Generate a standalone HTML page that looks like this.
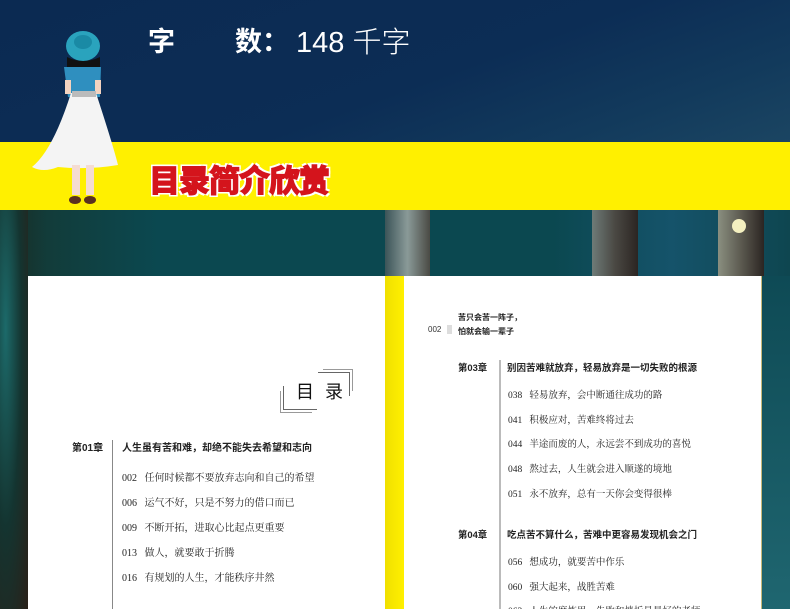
<!DOCTYPE html>
<html><head><meta charset="utf-8"><style>
*{margin:0;padding:0;box-sizing:border-box}
html,body{width:790px;height:609px;overflow:hidden}
body{position:relative;background:#0b4850;font-family:"Liberation Sans","Noto Sans CJK SC",sans-serif}
.a{position:absolute}
.t{position:absolute;font-family:"Liberation Serif","Noto Serif CJK SC",serif;font-size:10px;color:#222;white-space:nowrap}
.b{position:absolute;font-family:"Liberation Sans","Noto Sans CJK SC",sans-serif;font-size:10px;font-weight:bold;color:#222;white-space:nowrap}
</style></head><body>
<div class="a" style="left:0;top:0;width:790px;height:142px;background:linear-gradient(160deg,#0b2a52 0%,#0c2d55 55%,#123a5c 80%,#1b4562 100%)"></div>
<div class="a" style="left:148px;top:20px;font-size:27px;font-weight:bold;color:#fff">字</div>
<div class="a" style="left:235px;top:20px;font-size:27px;font-weight:bold;color:#fff">数：</div>
<div class="a" style="left:296px;top:19px;font-size:29px;font-weight:300;color:#fff">148 千字</div>
<div class="a" style="left:0;top:142px;width:790px;height:68px;background:#fff000"></div>
<div class="a" style="left:149px;top:156px;font-size:31px;font-weight:900;color:#d4141c;letter-spacing:-1px;-webkit-text-stroke:1px #d4141c;text-shadow:2px 2px 0 #fff,-2px -2px 0 #fff,2px -2px 0 #fff,-2px 2px 0 #fff">目录简介欣赏</div>
<!-- forest -->
<div class="a" style="left:0;top:210px;width:790px;height:399px;background:linear-gradient(90deg,#1a2a22 0%,#123c3a 6%,#0b4850 20%,#0b4850 70%,#15536a 85%,#0e4650 100%)"></div>
<div class="a" style="left:385px;top:210px;width:45px;height:66px;background:linear-gradient(90deg,#3b5458,#8a9a98,#4a4a44)"></div>
<div class="a" style="left:592px;top:210px;width:46px;height:66px;background:linear-gradient(90deg,#6e7b78,#4a4843,#2b2522)"></div>
<div class="a" style="left:718px;top:210px;width:46px;height:66px;background:linear-gradient(90deg,#8a8f80,#5c5a50,#2b2522)"></div>
<div class="a" style="left:732px;top:219px;width:14px;height:14px;border-radius:50%;background:#f4f0c0"></div>
<div class="a" style="left:0;top:210px;width:28px;height:399px;background:radial-gradient(ellipse at 20% 30%,#1c6a6a 0,#143430 50%,#2a2018 100%)"></div>
<div class="a" style="left:762px;top:276px;width:28px;height:333px;background:linear-gradient(180deg,#0e4a55,#1f6670)"></div>
<!-- pages -->
<div class="a" style="left:28px;top:276px;width:358px;height:333px;background:#fff"></div>
<div class="a" style="left:385px;top:276px;width:19px;height:333px;background:linear-gradient(90deg,#f0e000,#fff000)"></div>
<div class="a" style="left:404px;top:276px;width:358px;height:333px;background:#fff;border-right:1px solid #c8b878"></div>
<!-- 目录 box -->
<div class="a" style="left:283px;top:386px;width:34px;height:24px;border-left:1px solid #666;border-bottom:1px solid #666;box-shadow:-3px 3px 0 -1px #fff,-4px 4px 0 -1px #999"></div>
<div class="a" style="left:318px;top:372px;width:32px;height:24px;border-right:1px solid #666;border-top:1px solid #666;box-shadow:3px -3px 0 -1px #fff,4px -4px 0 -1px #999"></div>
<div class="a" style="left:296px;top:378px;font-size:18px;color:#111;letter-spacing:3px">目 录</div>
<!-- left toc -->
<div class="b" style="left:72px;top:439px">第01章</div>
<div class="a" style="left:112px;top:440px;width:1px;height:169px;background:#888"></div>
<div class="b" style="left:122px;top:439px">人生虽有苦和难，却绝不能失去希望和志向</div>
<div class="t" style="left:122px;top:469px">002 &nbsp; 任何时候都不要放弃志向和自己的希望</div>
<div class="t" style="left:122px;top:494px">006 &nbsp; 运气不好，只是不努力的借口而已</div>
<div class="t" style="left:122px;top:519px">009 &nbsp; 不断开拓，进取心比起点更重要</div>
<div class="t" style="left:122px;top:544px">013 &nbsp; 做人，就要敢于折腾</div>
<div class="t" style="left:122px;top:569px">016 &nbsp; 有规划的人生，才能秩序井然</div>
<!-- right toc -->
<div class="b" style="left:458px;top:312px;font-size:8px">苦只会苦一阵子，</div>
<div class="a" style="left:428px;top:325px;font-size:8px;color:#333">002</div>
<div class="a" style="left:447px;top:325px;width:5px;height:9px;background:#ddd"></div>
<div class="b" style="left:458px;top:326px;font-size:8px">怕就会输一辈子</div>
<div class="b" style="left:458px;top:360px;font-size:9.4px">第03章</div>
<div class="a" style="left:499px;top:360px;width:2px;height:249px;background:#bbb"></div>
<div class="b" style="left:507px;top:360px;font-size:9.5px">别因苦难就放弃，轻易放弃是一切失败的根源</div>
<div class="t" style="left:508px;top:387px;font-size:9.5px">038 &nbsp; 轻易放弃，会中断通往成功的路</div>
<div class="t" style="left:508px;top:412px;font-size:9.5px">041 &nbsp; 积极应对，苦难终将过去</div>
<div class="t" style="left:508px;top:436px;font-size:9.5px">044 &nbsp; 半途而废的人，永远尝不到成功的喜悦</div>
<div class="t" style="left:508px;top:461px;font-size:9.5px">048 &nbsp; 熬过去，人生就会进入顺遂的境地</div>
<div class="t" style="left:508px;top:486px;font-size:9.5px">051 &nbsp; 永不放弃，总有一天你会变得很棒</div>
<div class="b" style="left:458px;top:527px;font-size:9.4px">第04章</div>
<div class="b" style="left:507px;top:527px;font-size:9.5px">吃点苦不算什么，苦难中更容易发现机会之门</div>
<div class="t" style="left:508px;top:554px;font-size:9.5px">056 &nbsp; 想成功，就要苦中作乐</div>
<div class="t" style="left:508px;top:579px;font-size:9.5px">060 &nbsp; 强大起来，战胜苦难</div>
<div class="t" style="left:508px;top:603px;font-size:9.5px">063 &nbsp; 人生的磨炼里，失败和挫折是最好的老师</div>
<!-- girl -->
<svg class="a" style="left:28px;top:25px" width="95" height="185" viewBox="0 0 95 185">
<ellipse cx="55" cy="21" rx="17" ry="15" fill="#2aa3bd"/>
<ellipse cx="55" cy="17" rx="9" ry="7" fill="#1a8aa5"/>
<path d="M39 32 Q55 40 72 32 L72 50 L39 50Z" fill="#111"/>
<path d="M36 42 L73 42 L72 72 L40 72Z" fill="#2f8fbf"/>
<rect x="37" y="55" width="6" height="14" fill="#f3d3c0"/>
<rect x="67" y="55" width="6" height="14" fill="#f3d3c0"/>
<path d="M43 68 L68 68 Q85 120 90 140 Q60 145 30 142 Q15 148 4 142 Q25 125 43 68Z" fill="#f4f4f4"/>
<rect x="44" y="66" width="24" height="6" fill="#bbb"/>
<rect x="44" y="140" width="8" height="30" fill="#f5dcd2"/>
<rect x="58" y="140" width="8" height="30" fill="#f5dcd2"/>
<ellipse cx="47" cy="175" rx="6" ry="4" fill="#5a3020"/>
<ellipse cx="62" cy="175" rx="6" ry="4" fill="#5a3020"/>
</svg>
</body></html>
